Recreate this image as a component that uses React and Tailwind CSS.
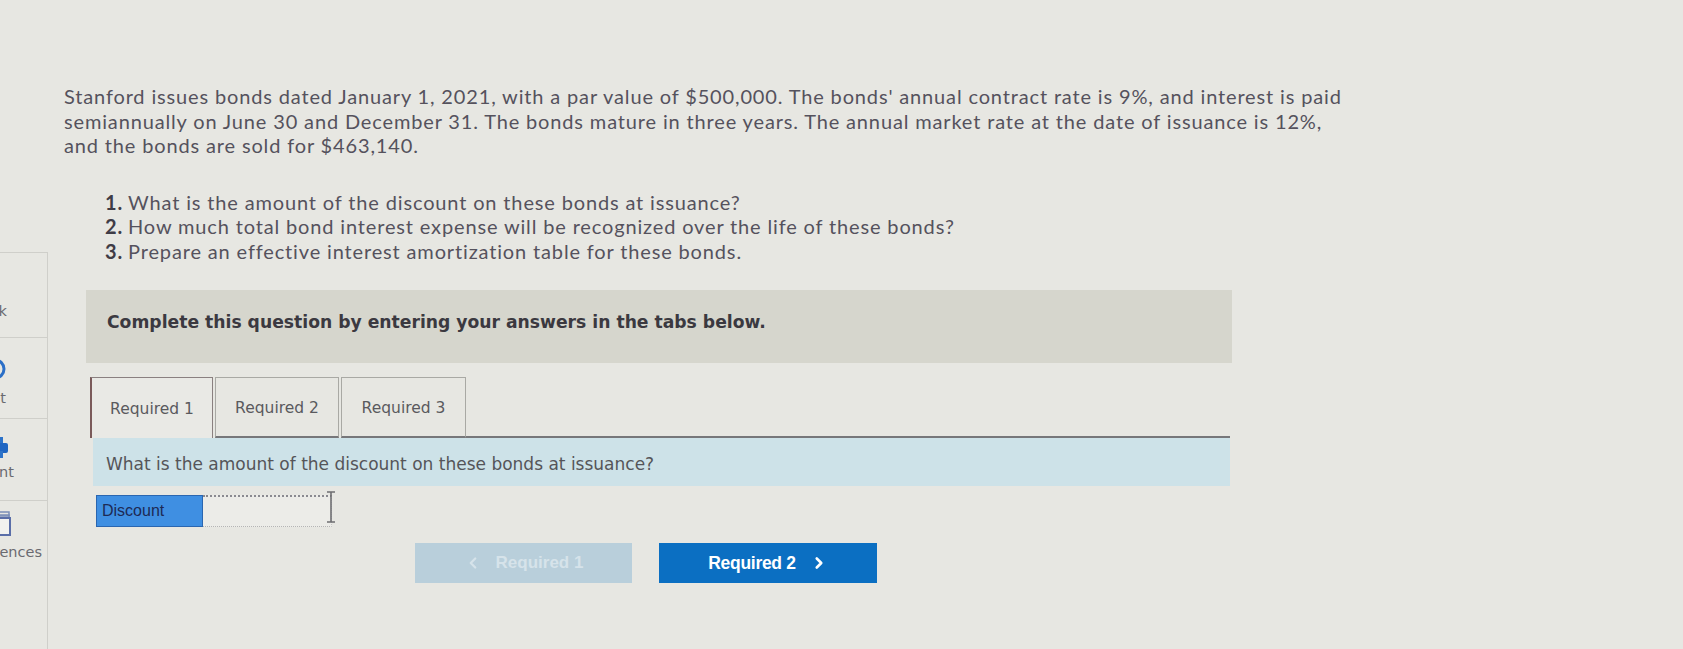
import { ChevronLeft, ChevronRight } from "lucide-react";

const sideItems = [
  { label: "eBook", h: "h-[85px]", pt: "pt-[22px]", icon: null, gap: "mt-[2px]", pr: "pr-[40px]" },
  { label: "Hint", h: "h-[81px]", pt: "pt-[18px]", icon: "hint", gap: "mt-[8px]", pr: "pr-[41px]" },
  { label: "Print", h: "h-[82px]", pt: "pt-[16px]", icon: "print", gap: "mt-[3px]", pr: "pr-[33px]" },
  { label: "References", h: "h-[82px]", pt: "pt-[9px]", icon: "refs", gap: "mt-[8px]", pr: "pr-[5px]" },
];

function SideIcon({ type }) {
  if (type === "hint") {
    return (
      <div className="pr-[39px]">
        <svg width="26" height="26" viewBox="0 0 26 26">
          <circle cx="13" cy="13" r="9" fill="none" stroke="#2b6fc7" strokeWidth="3" />
        </svg>
      </div>
    );
  }
  if (type === "print") {
    return (
      <div className="pr-[37px]">
        <svg width="26" height="26" viewBox="0 0 26 26">
          <rect x="7" y="2" width="12" height="6" fill="#2d73c9" />
          <rect x="2" y="8" width="22" height="10" rx="2" fill="#1f66c2" />
          <rect x="7" y="16" width="12" height="7" fill="#2d73c9" />
        </svg>
      </div>
    );
  }
  if (type === "refs") {
    return (
      <div className="pr-[32px]">
        <svg width="26" height="26" viewBox="0 0 26 26">
          <rect x="4" y="2" width="16" height="4" fill="none" stroke="#7b8fb8" strokeWidth="1.5" />
          <rect x="2" y="5" width="18" height="4" fill="none" stroke="#7b8fb8" strokeWidth="1.5" />
          <rect x="1" y="8" width="20" height="17" fill="#f2f2ef" stroke="#5a6ea8" strokeWidth="2" />
        </svg>
      </div>
    );
  }
  return <div className="h-[26px]" />;
}

function Sidebar() {
  return (
    <div className="mt-[252px] w-[48px] shrink-0 border-r border-[#cfcfca] overflow-hidden">
      {sideItems.map((it) => (
        <div
          key={it.label}
          className={`${it.h} ${it.pt} border-t border-[#cfcfca] flex flex-col items-end`}
        >
          <SideIcon type={it.icon} />
          <div
            className={`${it.gap} ${it.pr} whitespace-nowrap text-[14.5px] leading-[17px] text-[#6a6a70] font-['DejaVu_Sans',sans-serif]`}
          >
            {it.label}
          </div>
        </div>
      ))}
    </div>
  );
}

function App() {
  const questions = [
    "What is the amount of the discount on these bonds at issuance?",
    "How much total bond interest expense will be recognized over the life of these bonds?",
    "Prepare an effective interest amortization table for these bonds.",
  ];

  return (
    <div className="min-h-[649px] h-[649px] w-full bg-[#e7e7e2] flex overflow-hidden">
      <Sidebar />

      <div className="flex-1 pl-[16px] pt-[84px]">
        {/* Problem text */}
        <div className="font-['Lato','Liberation_Sans',sans-serif] text-[20px] leading-[24.5px] tracking-[0.85px] text-[#55525d] whitespace-nowrap">
          <div>
            Stanford issues bonds dated January 1, 2021, with a par value of $500,000. The bonds' annual contract rate is 9%, and interest is paid
          </div>
          <div>
            semiannually on June 30 and December 31. The bonds mature in three years. The annual market rate at the date of issuance is 12%,
          </div>
          <div>and the bonds are sold for $463,140.</div>
        </div>

        <ol className="mt-[32px] ml-[41px] font-['Lato','Liberation_Sans',sans-serif] text-[20px] leading-[24.5px] tracking-[0.85px] text-[#55525d] whitespace-nowrap">
          {questions.map((q, i) => (
            <li key={i} className="flex gap-[5px]">
              <span className="font-bold text-[#3f3c46]">{i + 1}.</span>
              <span>{q}</span>
            </li>
          ))}
        </ol>

        {/* Tabs area */}
        <div className="ml-[22px] mt-[27px] w-[1146px]">
          <div className="h-[73px] bg-[#d6d6cd] pl-[21px] pt-[22px]">
            <p className="font-['DejaVu_Sans',sans-serif] font-bold text-[17.2px] leading-[20px] text-[#3b3940]">
              Complete this question by entering your answers in the tabs below.
            </p>
          </div>

          <div className="mt-[14px] ml-[4px] flex items-end">
            <div className="h-[61px] w-[123px] pt-[4px] border-l-2 border-t border-r border-[#8a8080] border-l-[#7a5a5a] bg-[#e9e9e5] flex items-center justify-center">
              <span className="font-['DejaVu_Sans',sans-serif] text-[15.5px] text-[#5a5a5e]">Required 1</span>
            </div>
            <div className="ml-[2px] h-[61px] w-[124px] pt-[4px] border border-b-2 border-[#a9a9a4] border-b-[#77777a] flex items-center justify-center">
              <span className="font-['DejaVu_Sans',sans-serif] text-[15.5px] text-[#5a5a5e]">Required 2</span>
            </div>
            <div className="ml-[2px] h-[61px] w-[125px] pt-[4px] border border-b-2 border-[#a9a9a4] border-b-[#77777a] flex items-center justify-center">
              <span className="font-['DejaVu_Sans',sans-serif] text-[15.5px] text-[#5a5a5e]">Required 3</span>
            </div>
            <div className="flex-1 border-b-2 border-[#77777a] mr-[2px]" />
          </div>

          <div className="ml-[7px] mr-[2px] h-[48px] bg-[#cde2e8] pl-[13px] pt-[6px] flex items-center">
            <span className="font-['DejaVu_Sans',sans-serif] text-[17px] text-[#555559]">
              What is the amount of the discount on these bonds at issuance?
            </span>
          </div>

          <div className="mt-[9px] ml-[10px] flex items-stretch h-[32px]">
            <div className="w-[107px] bg-[#3f8fe2] border border-[#2a66b0] pl-[5px] flex items-center">
              <span className="font-['Liberation_Sans',sans-serif] text-[16px] text-[#1d2a55]">Discount</span>
            </div>
            <div className="relative w-[129px] bg-[#ecece8] border-t-2 border-dotted border-[#8a8a90] border-b border-b-[#b5b5b5] border-r border-r-[#c8c8c8]">
              <svg className="absolute -right-[6px] -top-[7px]" width="12" height="34" viewBox="0 0 12 34">
                <path d="M2 2h8M6 2v30M2 32h8" stroke="#6f6f72" strokeWidth="1.6" fill="none" />
              </svg>
            </div>
          </div>

          <div className="mt-[16px] ml-[329px] flex gap-[27px]">
            <button className="h-[40px] w-[217px] bg-[#b9cfdb] flex items-center justify-center gap-[14px] text-[#d6e3ea]">
              <ChevronLeft className="w-[18px] h-[18px]" strokeWidth={3} />
              <span className="font-['Liberation_Sans',sans-serif] font-bold text-[17px]">Required 1</span>
            </button>
            <button className="h-[40px] w-[218px] bg-[#0b6fc2] flex items-center justify-center gap-[14px] text-white">
              <span className="font-['Liberation_Sans',sans-serif] font-bold text-[17.5px] tracking-[-0.3px]">Required 2</span>
              <ChevronRight className="w-[18px] h-[18px]" strokeWidth={3.5} />
            </button>
          </div>
        </div>
      </div>
    </div>
  );
}

export default App;
